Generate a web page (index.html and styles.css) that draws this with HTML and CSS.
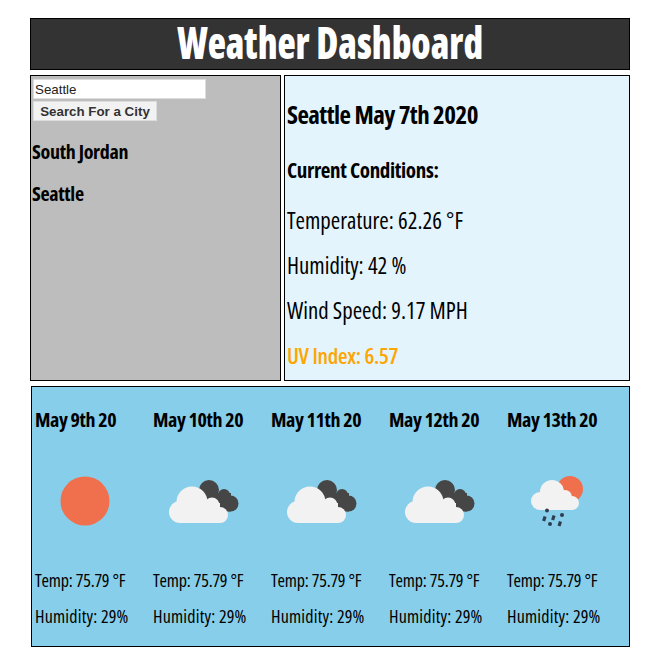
FILE: index.html
```html
<!DOCTYPE html>
<html lang="en">
<head>
    <meta charset="UTF-8">
    <meta name="viewport" content="width=device-width, initial-scale=1.0">
    <title>Weather Dashboard</title>
    <link rel="stylesheet" href="styles.css">
</head>
<body>

    <div class="page">
        <h1 class="title"><span class="title-text">Weather Dashboard</span></h1>

        <div class="top">
            <div class="search-panel">
                <input class="city-input" type="text" value="Seattle">
                <button class="search-btn" type="button">Search For a City</button>
                <p class="city">South Jordan</p>
                <p class="city">Seattle</p>
            </div>

            <div class="current">
                <h2 class="current-city">Seattle May 7th 2020</h2>
                <h3 class="current-label">Current Conditions:</h3>
                <p class="stat">Temperature: 62.26 °F</p>
                <p class="stat">Humidity: 42 %</p>
                <p class="stat">Wind Speed: 9.17 MPH</p>
                <p class="stat uv">UV Index: 6.57</p>
            </div>
        </div>

        <div class="forecast">
            <div class="day">
                <h4 class="day-date">May 9th 20</h4>
                <svg class="day-icon" viewBox="0 0 100 100"><circle cx="50" cy="50" r="24.5" fill="#f0704d"/></svg>
                <p class="day-stat day-temp">Temp: 75.79 °F</p>
                <p class="day-stat day-humidity">Humidity: 29%</p>
            </div>
            <div class="day">
                <h4 class="day-date">May 10th 20</h4>
                <svg class="day-icon" viewBox="0 0 100 100"><use href="#clouds"/></svg>
                <p class="day-stat day-temp">Temp: 75.79 °F</p>
                <p class="day-stat day-humidity">Humidity: 29%</p>
            </div>
            <div class="day">
                <h4 class="day-date">May 11th 20</h4>
                <svg class="day-icon" viewBox="0 0 100 100"><use href="#clouds"/></svg>
                <p class="day-stat day-temp">Temp: 75.79 °F</p>
                <p class="day-stat day-humidity">Humidity: 29%</p>
            </div>
            <div class="day">
                <h4 class="day-date">May 12th 20</h4>
                <svg class="day-icon" viewBox="0 0 100 100"><use href="#clouds"/></svg>
                <p class="day-stat day-temp">Temp: 75.79 °F</p>
                <p class="day-stat day-humidity">Humidity: 29%</p>
            </div>
            <div class="day">
                <h4 class="day-date">May 13th 20</h4>
                <svg class="day-icon" viewBox="0 0 100 100">
                    <circle cx="63" cy="38" r="13" fill="#f0704d"/>
                    <g fill="#f2f2f2">
                        <circle cx="45" cy="41" r="12"/>
                        <circle cx="33" cy="50" r="9"/>
                        <circle cx="58" cy="46" r="7"/>
                        <circle cx="65" cy="52" r="7"/>
                        <rect x="33" y="45" width="32" height="14"/>
                    </g>
                    <g fill="#2f3d4f">
                        <circle cx="40" cy="59.500" r="2"/>
                        <circle cx="55" cy="64" r="2"/>
                        <circle cx="43" cy="73" r="2"/>
                        <path d="M36.600 65l3 .9-1.500 4.600-3-.9zM45.600 64l3 .9-1.500 4.600-3-.9zM52 70l3 .9-1.500 4.600-3-.9z"/>
                    </g>
                </svg>
                <p class="day-stat day-temp">Temp: 75.79 °F</p>
                <p class="day-stat day-humidity">Humidity: 29%</p>
            </div>
        </div>
    </div>

    <svg class="defs" width="0" height="0">
        <defs>
            <g id="clouds">
                <g fill="#464646">
                    <circle cx="56" cy="39" r="10"/>
                    <circle cx="71" cy="44" r="6"/>
                    <circle cx="77.500" cy="52.500" r="8"/>
                    <rect x="55" y="42" width="23" height="18.500"/>
                </g>
                <g fill="#f2f2f2">
                    <circle cx="39" cy="51" r="15.500"/>
                    <circle cx="27" cy="61" r="11"/>
                    <circle cx="59" cy="54" r="7.500"/>
                    <circle cx="67" cy="64" r="8"/>
                    <rect x="27" y="52" width="40" height="20"/>
                </g>
            </g>
        </defs>
    </svg>

</body>
</html>
```

FILE: styles.css
```css
body {
    font-family: "Open Sans", sans-serif;
    font-stretch: 75%;
    margin: 0;
    background-color: white;
    color: black;
}

.page {
    width: 600px;
    margin: 18px 0 0 30px;
    display: flex;
    flex-direction: column;
    gap: 5px;
}

.title {
    height: 52px;
    margin: 0;
    line-height: 46px;
    font-size: 45px;
    font-weight: 800;
    text-align: center;
    color: white;
    background-color: #333;
    border: 1px solid black;
    box-sizing: border-box;
    white-space: nowrap;
}

/* no font this narrow is installed, so squeeze the big title */
.title-text {
    display: inline-block;
    transform: scaleX(0.835);
}

.top {
    display: flex;
    gap: 3px;
    height: 306px;
}

.search-panel {
    width: 251px;
    padding: 3px 2px;
    box-sizing: border-box;
    background-color: #bdbdbd;
    border: 1px solid black;
    display: flex;
    flex-direction: column;
    align-items: flex-start;
}

.city-input {
    width: 173px;
    height: 20px;
    padding: 0 1px;
    box-sizing: border-box;
    font-family: "Liberation Sans", sans-serif;
    font-size: 13.333px;
    color: #222;
    background-color: white;
    border: 1px solid #ddd;
}

.search-btn {
    margin-top: 2px;
    width: 124px;
    height: 20px;
    padding: 0;
    font-family: "Liberation Sans", sans-serif;
    font-size: 13.333px;
    font-weight: bold;
    white-space: nowrap;
    color: #333;
    background-color: #f2f2f2;
    border: 1px solid #ddd;
}

.city {
    margin: 19px 0 0 -1px;
    font-size: 20px;
    font-weight: bold;
    letter-spacing: -0.3px;
    line-height: 23px;
}

.current {
    flex: 1;
    padding: 0 2px;
    box-sizing: border-box;
    background-color: #e3f4fd;
    border: 1px solid black;
}

.current-city {
    margin: 23px 0 0;
    font-size: 25px;
    letter-spacing: -0.55px;
    line-height: 30px;
}

.current-label {
    margin: 29px 0 25px;
    font-size: 21px;
    letter-spacing: -0.35px;
    line-height: 25px;
}

.stat {
    margin: 20px 0 0;
    font-size: 22.8px;
    line-height: 25px;
}

.uv {
    color: orange;
    font-weight: 600;
    font-size: 22px;
    letter-spacing: -0.3px;
}

.forecast {
    margin-left: 1px;
    height: 261px;
    padding: 0 3px;
    box-sizing: border-box;
    background-color: skyblue;
    border: 1px solid black;
    display: flex;
}

.day {
    width: 118px;
    white-space: nowrap;
}

.day-date {
    margin: 21px 0 0;
    font-size: 20px;
    letter-spacing: -0.4px;
    line-height: 24px;
}

.day-icon {
    display: block;
    width: 100px;
    height: 100px;
    margin-top: 19px;
}

.day-stat {
    margin: 16px 0 0;
    font-size: 18px;
    line-height: 20px;
}

.day-temp {
    margin-top: 19px;
    letter-spacing: -0.2px;
}

.day-humidity {
    letter-spacing: 0.2px;
}

.defs {
    position: absolute;
}
```
